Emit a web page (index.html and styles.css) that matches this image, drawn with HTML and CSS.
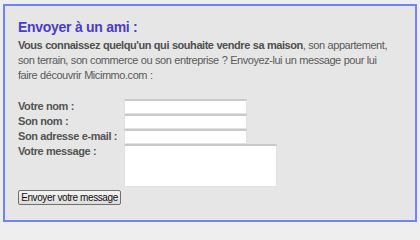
FILE: index.html
```html
<!DOCTYPE html>
<html lang="fr">
<head>
<meta charset="utf-8">
<title>Envoyer à un ami</title>
<link rel="stylesheet" href="styles.css">
</head>
<body>
<div class="box">
  <h2 class="title">Envoyer à un ami :</h2>
  <p class="intro"><strong>Vous connaissez quelqu'un qui souhaite vendre sa maison</strong>, son appartement, son terrain, son commerce ou son entreprise ? Envoyez-lui un message pour lui faire découvrir Micimmo.com :</p>
  <form class="form">
    <label class="lbl">Votre nom :</label><input class="field" type="text">
    <label class="lbl">Son nom :</label><input class="field" type="text">
    <label class="lbl">Son adresse e-mail :</label><input class="field" type="text">
    <label class="lbl">Votre message :</label><textarea class="area"></textarea>
    <div class="actions"><button class="btn" type="button">Envoyer votre message</button></div>
  </form>
</div>
</body>
</html>
```
FILE: styles.css
```css
html, body {
  margin: 0;
  padding: 0;
  background: #eeeeee;
}
body {
  padding: 4px 3px;
  font-family: "Liberation Sans", Arial, sans-serif;
}
.box {
  width: 414px;
  height: 218px;
  box-sizing: border-box;
  border: 2px solid #6f83ff;
  background: #e6e6e6;
  padding: 13px 22px 0 13px;
}
.title {
  margin: 0;
  font-size: 14px;
  line-height: 17px;
  font-weight: bold;
  letter-spacing: -0.28px;
  color: #4b3bcc;
}
.intro {
  margin: 2px 0 0 0;
  font-size: 11px;
  line-height: 15px;
  letter-spacing: -0.45px;
  word-spacing: 0.3px;
  color: #5a5a5a;
}
.intro strong {
  color: #505050;
}
.form {
  margin-top: 16px;
  display: grid;
  grid-template-columns: 106px auto;
  justify-content: start;
}
.lbl {
  font-size: 11px;
  font-weight: bold;
  color: #555555;
  line-height: 15px;
  letter-spacing: -0.4px;
  white-space: nowrap;
}
.field, .area {
  margin: 0;
  box-sizing: border-box;
  background: #ffffff;
  border: 1px solid #e2e2e2;
  border-top: 2px solid #c9c9c9;
  padding: 0;
  font-family: inherit;
  display: block;
}
.field {
  width: 123px;
  height: 15px;
}
.area {
  width: 153px;
  height: 43px;
  resize: none;
}
.actions {
  grid-column: 1 / 3;
  margin-top: 3px;
  display: flex;
}
.btn {
  width: 103px;
  height: 15px;
  padding: 0;
  box-sizing: border-box;
  border: 1px solid #707070;
  border-radius: 2px;
  background: linear-gradient(#f4f4f4, #dcdcdc);
  font-family: "Liberation Sans", Arial, sans-serif;
  font-size: 10px;
  letter-spacing: -0.4px;
  color: #111111;
  line-height: 12px;
}
```
